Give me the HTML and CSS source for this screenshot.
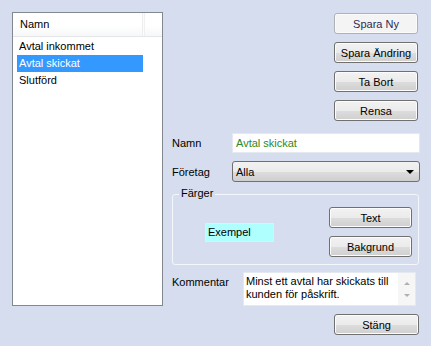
FILE: index.html
```html
<!DOCTYPE html>
<html lang="sv">
<head>
<meta charset="utf-8">
<title>Status</title>
<link rel="stylesheet" href="styles.css">
</head>
<body>
<div class="window">
  <div class="list">
    <div class="list-head">
      <span class="col">Namn</span>
      <span class="col-rest"></span>
    </div>
    <ul class="items">
      <li>Avtal inkommet</li>
      <li class="sel">Avtal skickat</li>
      <li>Slutförd</li>
    </ul>
  </div>
  <div class="panel">
    <div class="actions">
      <button class="btn btn-default">Spara Ny</button>
      <button class="btn">Spara Ändring</button>
      <button class="btn">Ta Bort</button>
      <button class="btn">Rensa</button>
    </div>
    <div class="row row-name">
      <span class="label">Namn</span>
      <div class="input green">Avtal skickat</div>
    </div>
    <div class="row row-company">
      <span class="label">Företag</span>
      <div class="combo"><span>Alla</span><span class="arrow"></span></div>
    </div>
    <div class="group">
      <span class="legend">Färger</span>
      <div class="group-body">
        <div class="sample">Exempel</div>
        <div class="group-buttons">
          <button class="btn btn-small">Text</button>
          <button class="btn btn-small">Bakgrund</button>
        </div>
      </div>
    </div>
    <div class="row row-comment">
      <span class="label label-wide">Kommentar</span>
      <div class="memo">
        <div class="memo-text">Minst ett avtal har skickats till kunden för påskrift.</div>
        <div class="memo-scroll">
          <span class="up"></span>
          <span class="down"></span>
        </div>
      </div>
    </div>
    <div class="footer">
      <button class="btn">Stäng</button>
    </div>
  </div>
</div>
</body>
</html>
```
FILE: styles.css
```css
* { box-sizing: border-box; }
html, body { margin: 0; padding: 0; }
body {
  width: 431px;
  height: 346px;
  background: #d5ddef;
  font-family: "Liberation Sans", Arial, sans-serif;
  font-size: 11px;
  color: #000;
  overflow: hidden;
}
.window {
  display: flex;
  padding: 12px 0 0 12px;
}
.list {
  width: 151px;
  height: 294px;
  background: #fff;
  border: 1px solid #828790;
}
.list-head {
  display: flex;
  height: 24px;
  border-bottom: 1px solid #e5e6e7;
  background: linear-gradient(#ffffff, #ffffff 55%, #f6f7f8);
}
.list-head .col {
  width: 130px;
  padding-left: 7px;
  line-height: 23px;
  border-right: 1px solid #eceef0;
  box-shadow: 1px 0 0 #fcfcfc, 2px 0 0 #eef0f2;
}
.list-head .col-rest { flex: 1; }
.items {
  list-style: none;
  margin: 1px 0 0 0;
  padding: 0;
}
.items li {
  margin-left: 4px;
  width: 126px;
  height: 17px;
  line-height: 17px;
  padding-left: 2px;
  white-space: nowrap;
}
.items li.sel {
  background: #3399ff;
  color: #fff;
}
.panel {
  width: 248px;
  margin-left: 9px;
  display: flex;
  flex-direction: column;
}
.actions {
  display: flex;
  flex-direction: column;
  align-items: flex-end;
  gap: 8px;
  margin-top: 1px;
  padding-right: 2px;
}
.btn {
  width: 84px;
  height: 21px;
  padding: 0;
  font-family: "Liberation Sans", Arial, sans-serif;
  font-size: 11px;
  color: #000;
  border: 1px solid #707070;
  border-radius: 3px;
  background: linear-gradient(#f2f2f2, #ebebeb 50%, #dddddd 51%, #cfcfcf);
  box-shadow: inset 0 0 0 1px #fcfcfc;
}
.btn-default {
  color: #2c2c50;
  border-color: #adb2b5;
  background: #f4f4f4;
  box-shadow: inset 0 0 0 1px #fbfbfb;
}
.btn-small { width: 83px; }
.row {
  display: flex;
  align-items: center;
}
.label {
  width: 60px;
  flex: none;
}
.label-wide { width: 71px; }
.row-name { margin-top: 12px; }
.row-company { margin-top: 8px; }
.input {
  width: 188px;
  height: 20px;
  line-height: 18px;
  padding-left: 3px;
  background: #fff;
  border: 1px solid #e3e9ef;
}
.green { color: #2a8a2a; }
.combo {
  width: 188px;
  height: 21px;
  display: flex;
  align-items: center;
  justify-content: space-between;
  padding: 0 5px 0 3px;
  border: 1px solid #707070;
  border-radius: 3px;
  background: linear-gradient(#f2f2f2, #ebebeb 50%, #dddddd 51%, #cfcfcf);
}
.arrow {
  width: 0;
  height: 0;
  border-left: 4px solid transparent;
  border-right: 4px solid transparent;
  border-top: 4px solid #000;
}
.group {
  position: relative;
  margin-top: 12px;
  width: 247px;
  height: 71px;
  border: 1px solid #f4f7fc;
  border-radius: 3px;
}
.legend {
  position: absolute;
  top: -8px;
  left: 6px;
  padding: 0 2px;
  line-height: 13px;
  background: #d5ddef;
}
.group-body {
  height: 100%;
  display: flex;
  align-items: center;
  justify-content: space-between;
  padding: 11px 6px 6px 32px;
}
.sample {
  width: 69px;
  height: 19px;
  line-height: 17px;
  padding-left: 2px;
  background: #b0ffff;
  border: 1px solid #e6ecf2;
}
.group-buttons {
  display: flex;
  flex-direction: column;
  gap: 8px;
}
.row-comment {
  margin-top: 7px;
  align-items: flex-start;
}
.row-comment .label { padding-top: 4px; }
.memo {
  width: 173px;
  height: 34px;
  display: flex;
  background: #fff;
  border: 1px solid #e3e9ef;
}
.memo-text {
  flex: 1;
  padding: 2px 0 0 2px;
  line-height: 13px;
}
.memo-scroll {
  width: 17px;
  display: flex;
  flex-direction: column;
  align-items: center;
  justify-content: space-around;
  background: #f6f6f6;
  padding: 4px 0;
}
.up, .down {
  width: 0;
  height: 0;
  border-left: 3px solid transparent;
  border-right: 3px solid transparent;
}
.up { border-bottom: 3px solid #b0b0b0; }
.down { border-top: 3px solid #b0b0b0; }
.footer {
  display: flex;
  justify-content: flex-end;
  margin-top: 8px;
  padding-right: 1px;
}
.footer .btn { width: 85px; }
```
